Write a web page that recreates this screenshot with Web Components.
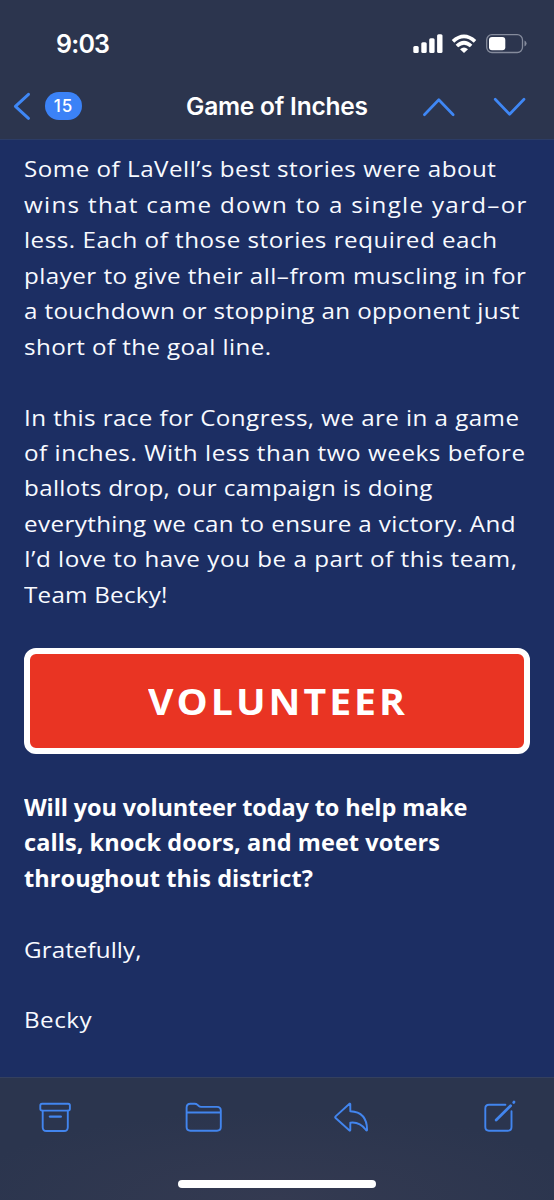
<!DOCTYPE html>
<html lang="en">
<head>
<meta charset="utf-8">
<title>Game of Inches</title>
<style>
html,body{margin:0;padding:0;background:#1c2e63}
body{width:554px;height:1200px;overflow:hidden}
</style>
</head>
<body>
<mail-screen></mail-screen>
<script>
const define = (name, html, setup) => {
  const t = document.createElement('template');
  t.innerHTML = html;
  customElements.define(name, class extends HTMLElement {
    constructor() {
      super();
      this.attachShadow({mode: 'open'}).append(t.content.cloneNode(true));
    }
    connectedCallback() { if (setup) setup(this); }
  });
};

/* One line of text, tracked so that it spans the requested width.
   --stretch widens the letterforms before tracking is applied. */
const fit = el => {
  const s = el.shadowRoot.querySelector('span');
  const text = el.getAttribute('text');
  s.textContent = text;
  const k = parseFloat(getComputedStyle(el).getPropertyValue('--stretch')) || 1;
  const w = parseFloat(el.getAttribute('w')) / k;
  const gap = (w - s.getBoundingClientRect().width) / (text.length - 1);
  s.style.letterSpacing = gap.toFixed(4) + 'px';
  if (k !== 1) s.style.transform = `scaleX(${k})`;
};
define('fit-line', `<style>:host{display:block;white-space:pre}span{display:inline-block;transform-origin:0 50%}</style><span></span>`, fit);

define('status-bar', `<style>
:host{display:flex;height:74px;box-sizing:border-box;padding:14px 27px 0 56px;align-items:center;justify-content:space-between;color:#fff;font:600 25px/30px Inter,sans-serif}
svg{display:block;margin-left:auto}
</style>
<fit-line text="9:03" w="54"></fit-line>
<svg width="115" height="22" viewBox="412 33 115 22">
<g fill="#fff"><rect x="413.3" y="46" width="5.4" height="7" rx="1.5"/><rect x="421.3" y="42.3" width="5.4" height="10.7" rx="1.5"/><rect x="429.2" y="38.2" width="5.4" height="14.8" rx="1.5"/><rect x="437.1" y="34.3" width="5.4" height="18.7" rx="1.5"/></g>
<g fill="none" stroke="#fff" stroke-width="3.7"><path d="M453 41.3Q464 31.4 475 41.3"/><path d="M456.9 46Q464 39.4 471.1 46"/></g>
<path d="M460 49.2Q464 45.6 468 49.2L464 53Z" fill="#fff"/>
<rect x="486.7" y="34.7" width="35.8" height="17.8" rx="5.2" fill="none" stroke="#858b9c" stroke-width="1.3"/>
<rect x="489" y="37" width="16.3" height="13.2" rx="3" fill="#fff"/>
<path d="M524.5 40.6Q526.6 41.5 526.6 43.6T524.5 46.6Z" fill="#858b9c"/>
</svg>`);

define('nav-bar', `<style>
:host{display:grid;grid-template-columns:44px 142px 1fr 146px;height:65px;align-items:center;color:#fff}
svg{display:block}
.badge{width:37px;height:28px;border-radius:14px;background:#3b82f7;display:flex;align-items:center;justify-content:center;font:500 17px/28px Inter,sans-serif;margin:-1px 0 0 1px}
.title{font:600 24.5px/30px Inter,sans-serif;margin-top:-1px}
</style>
<svg width="44" height="65" viewBox="0 74 44 65"><path d="M28.5 94.3L15.4 106.3L28.5 118.3" fill="none" stroke="#3f87f5" stroke-width="3" stroke-linecap="round" stroke-linejoin="round"/></svg>
<div class="badge"><fit-line text="15" w="18.5"></fit-line></div>
<div class="title"><fit-line text="Game of Inches" w="182"></fit-line></div>
<svg width="146" height="65" viewBox="408 74 146 65"><g fill="none" stroke="#3f87f5" stroke-width="2.7" stroke-linecap="round" stroke-linejoin="round"><path d="M424.4 114.8L438.8 99.8L453.2 114.8"/><path d="M495.2 99.2L509.6 114.2L524 99.2"/></g></svg>`);

define('cta-button', `<style>
:host{display:flex;box-sizing:border-box;height:106px;border:6px solid #fff;border-radius:12px;background:#e93423;color:#fff;align-items:center;padding:3px 0 0 118px;font:700 36px/48px "Open Sans",sans-serif;--stretch:1.09}
</style><fit-line text="VOLUNTEER" w="257"></fit-line>`);

define('mail-body', `<style>
:host{display:block;height:937.5px;box-sizing:border-box;padding:11.9px 24px 0;background:#1c2e63;color:#f8faff;font:400 22.4px/35.45px "Open Sans",sans-serif;--stretch:1.08}
p{margin:0 0 35.45px}
cta-button{margin:1.4px 0 36px}
.b{font-weight:700;color:#fff;--stretch:1.05}
</style>
<p><fit-line text="Some of LaVell’s best stories were about" w="472"></fit-line>
<fit-line text="wins that came down to a single yard–or" w="502.5"></fit-line>
<fit-line text="less. Each of those stories required each" w="473"></fit-line>
<fit-line text="player to give their all–from muscling in for" w="502"></fit-line>
<fit-line text="a touchdown or stopping an opponent just" w="495.5"></fit-line>
<fit-line text="short of the goal line." w="247"></fit-line></p>
<p><fit-line text="In this race for Congress, we are in a game" w="495"></fit-line>
<fit-line text="of inches. With less than two weeks before" w="501"></fit-line>
<fit-line text="ballots drop, our campaign is doing" w="408.5"></fit-line>
<fit-line text="everything we can to ensure a victory. And" w="491.5"></fit-line>
<fit-line text="I’d love to have you be a part of this team," w="493"></fit-line>
<fit-line text="Team Becky!" w="143.5"></fit-line></p>
<cta-button></cta-button>
<p class="b"><fit-line text="Will you volunteer today to help make" w="443.5"></fit-line>
<fit-line text="calls, knock doors, and meet voters" w="416"></fit-line>
<fit-line text="throughout this district?" w="289"></fit-line></p>
<p><fit-line text="Gratefully," w="117.5"></fit-line></p>
<p><fit-line text="Becky" w="67.5"></fit-line></p>`);

define('tool-bar', `<style>
:host{display:flex;flex-direction:column;align-items:center;justify-content:space-between;box-sizing:border-box;height:123px;border-top:1.5px solid #34405f;background:radial-gradient(ellipse 320px 90px at 50% 100%,#343a51,#2b354e);padding:17px 0 12px}
nav{display:flex;justify-content:space-between;width:554px;box-sizing:border-box;padding:0 33px}
svg{display:block;fill:none;stroke:#4285ee;stroke-width:1.9;stroke-linecap:round;stroke-linejoin:round}
.home{width:198px;height:8px;border-radius:4px;background:#fff}
</style>
<nav>
<svg width="44" height="44" viewBox="33 1095 44 44"><rect x="40.3" y="1103.8" width="29.6" height="6.8" rx="1.8"/><path d="M42.7 1110.8V1127.2Q42.7 1131 46.5 1131H64Q67.8 1131 67.8 1127.2V1110.8"/><path d="M50 1116.6H60.8" stroke-width="2.4"/></svg>
<svg width="44" height="44" viewBox="181 1095 44 44"><path d="M186.6 1107.6Q186.6 1103.7 190.4 1103.7H194.6Q196.3 1103.7 197.6 1104.9L198.6 1105.9Q199.6 1106.9 201.2 1106.9H217Q220.8 1106.9 220.8 1110.6V1127Q220.8 1130.7 217 1130.7H190.4Q186.6 1130.7 186.6 1127ZM186.6 1112.5H220.8"/></svg>
<svg width="44" height="44" viewBox="329 1095 44 44"><path d="M350.3 1104.1Q350.3 1103.1 349.2 1104L335.6 1116.4Q334.7 1117.2 335.6 1118L349.2 1130.3Q350.3 1131.2 350.3 1130V1122.7C357 1121.9 361.5 1124 365.8 1129.8Q367.1 1131.4 367.1 1129.8C367 1118 361.5 1111.7 350.3 1111.2Z"/></svg>
<svg width="44" height="44" viewBox="477 1095 44 44"><path d="M505.4 1104.7H489Q485.3 1104.7 485.3 1108.4V1127Q485.3 1130.7 489 1130.7H507.8Q511.5 1130.7 511.5 1127V1111.2"/><path d="M496.2 1120L510.6 1105.8" stroke-width="2.8"/><path d="M513.7 1102.4L514 1102.1" stroke-width="2.8"/></svg>
</nav>
<div class="home"></div>`);

define('mail-screen', `<style>
:host{display:flex;flex-direction:column;width:554px;height:1200px;overflow:hidden}
header{height:139.5px;box-sizing:border-box;border-bottom:1.5px solid #2c3c66;background:#2c354e}
</style>
<header><status-bar></status-bar><nav-bar></nav-bar></header>
<mail-body></mail-body>
<tool-bar></tool-bar>`);
</script>
</body>
</html>
